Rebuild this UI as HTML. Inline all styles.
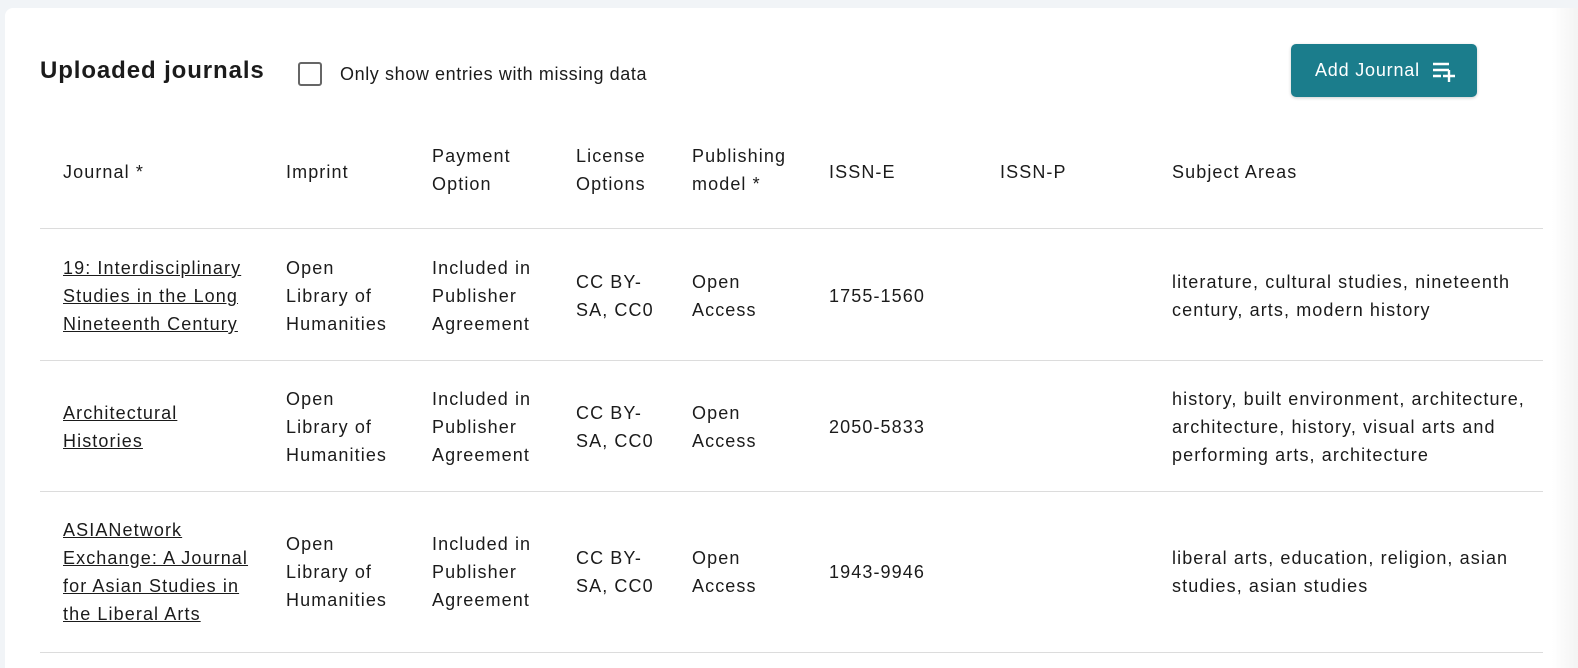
<!DOCTYPE html>
<html><head><style>
html,body{margin:0;padding:0;width:1578px;height:660px;overflow:hidden;background:#f1f4f7;font-family:"Liberation Sans",sans-serif;color:#1b1b1b}
.card{position:absolute;left:5px;top:8px;width:1573px;height:660px;background:#fff;border-radius:8px 0 0 0}
.fade{position:absolute;right:0;top:8px;width:26px;height:660px;background:linear-gradient(to right,#fff,#f3f3f3)}
h1{position:absolute;left:40px;top:57px;margin:0;font-size:24px;font-weight:bold;color:#1b1b1b;letter-spacing:0.9px}
.cb{position:absolute;left:298px;top:62px;width:24px;height:24px;border:2px solid #666;border-radius:3px;box-sizing:border-box}
.cbl{position:absolute;left:340px;top:64px;font-size:18px;letter-spacing:0.6px}
.btn{position:absolute;left:1291px;top:44px;width:186px;height:53px;background:#1b7d8c;border-radius:5px;color:#fff;font-size:18px;letter-spacing:0.8px;box-shadow:0 1px 3px rgba(0,0,0,.2)}
.btn span{position:absolute;left:24px;top:16px}
.btn svg{position:absolute;left:140px;top:16px}
.c{position:absolute;font-size:18px;line-height:28px;letter-spacing:1.1px;white-space:nowrap}
.hr{position:absolute;left:40px;width:1503px;height:1px;background:#dcdcdc}
a{color:#1b1b1b;text-decoration:underline}
</style></head><body>
<div class="card"></div><div class="fade"></div>
<h1>Uploaded journals</h1>
<div class="cb"></div><div class="cbl">Only show entries with missing data</div>
<div class="btn"><span>Add Journal</span><svg width="26" height="22" viewBox="0 0 26 22"><g stroke="#fff" stroke-width="2.4" fill="none"><path d="M2 4h16M2 10h16M2 16h8M18 10v12M12 16h12"/></g></svg></div>

<div class="c" style="left:63px;top:158px">Journal *</div>
<div class="c" style="left:286px;top:158px">Imprint</div>
<div class="c" style="left:432px;top:142px">Payment<br>Option</div>
<div class="c" style="left:576px;top:142px">License<br>Options</div>
<div class="c" style="left:692px;top:142px">Publishing<br>model *</div>
<div class="c" style="left:829px;top:158px">ISSN-E</div>
<div class="c" style="left:1000px;top:158px">ISSN-P</div>
<div class="c" style="left:1172px;top:158px">Subject Areas</div>
<div class="hr" style="top:228px"></div>

<div class="c" style="left:63px;top:254px"><a>19: Interdisciplinary<br>Studies in the Long<br>Nineteenth Century</a></div>
<div class="c" style="left:286px;top:254px">Open<br>Library of<br>Humanities</div>
<div class="c" style="left:432px;top:254px">Included in<br>Publisher<br>Agreement</div>
<div class="c" style="left:576px;top:268px">CC BY-<br>SA, CC0</div>
<div class="c" style="left:692px;top:268px">Open<br>Access</div>
<div class="c" style="left:829px;top:282px">1755-1560</div>
<div class="c" style="left:1172px;top:268px">literature, cultural studies, nineteenth<br>century, arts, modern history</div>
<div class="hr" style="top:360px"></div>

<div class="c" style="left:63px;top:399px"><a>Architectural<br>Histories</a></div>
<div class="c" style="left:286px;top:385px">Open<br>Library of<br>Humanities</div>
<div class="c" style="left:432px;top:385px">Included in<br>Publisher<br>Agreement</div>
<div class="c" style="left:576px;top:399px">CC BY-<br>SA, CC0</div>
<div class="c" style="left:692px;top:399px">Open<br>Access</div>
<div class="c" style="left:829px;top:413px">2050-5833</div>
<div class="c" style="left:1172px;top:385px">history, built environment, architecture,<br>architecture, history, visual arts and<br>performing arts, architecture</div>
<div class="hr" style="top:491px"></div>

<div class="c" style="left:63px;top:516px"><a>ASIANetwork<br>Exchange: A Journal<br>for Asian Studies in<br>the Liberal Arts</a></div>
<div class="c" style="left:286px;top:530px">Open<br>Library of<br>Humanities</div>
<div class="c" style="left:432px;top:530px">Included in<br>Publisher<br>Agreement</div>
<div class="c" style="left:576px;top:544px">CC BY-<br>SA, CC0</div>
<div class="c" style="left:692px;top:544px">Open<br>Access</div>
<div class="c" style="left:829px;top:558px">1943-9946</div>
<div class="c" style="left:1172px;top:544px">liberal arts, education, religion, asian<br>studies, asian studies</div>
<div class="hr" style="top:652px"></div>
</body></html>
